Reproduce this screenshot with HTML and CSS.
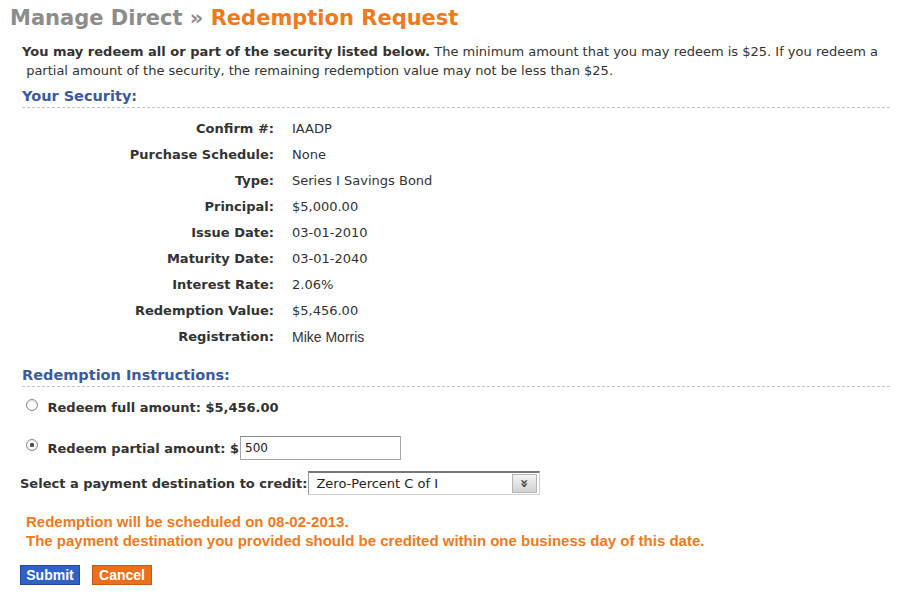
FILE: index.html
```html
<!DOCTYPE html>
<html lang="en">
<head>
  <meta charset="UTF-8">
  <title>Manage Direct - Redemption Request</title>
  <link rel="stylesheet" href="styles.css">
</head>
<body>
  <h1 class="page-title"><span class="crumb">Manage Direct &raquo;</span> <span class="current">Redemption Request</span></h1>

  <p class="intro"><strong>You may redeem all or part of the security listed below.</strong> The minimum amount that you may redeem is $25. If you redeem a<br>&nbsp;partial amount of the security, the remaining redemption value may not be less than $25.</p>

  <h2 class="section-title">Your Security:</h2>
  <dl class="details">
    <dt>Confirm #:</dt><dd>IAADP</dd>
    <dt>Purchase Schedule:</dt><dd>None</dd>
    <dt>Type:</dt><dd>Series I Savings Bond</dd>
    <dt>Principal:</dt><dd>$5,000.00</dd>
    <dt>Issue Date:</dt><dd>03-01-2010</dd>
    <dt>Maturity Date:</dt><dd>03-01-2040</dd>
    <dt>Interest Rate:</dt><dd>2.06%</dd>
    <dt>Redemption Value:</dt><dd>$5,456.00</dd>
    <dt>Registration:</dt><dd class="name">Mike Morris</dd>
  </dl>

  <h2 class="section-title">Redemption Instructions:</h2>
  <div class="options">
    <label class="option"><input type="radio" name="amount"> Redeem full amount: $5,456.00</label>
    <label class="option partial"><input type="radio" name="amount" checked> Redeem partial amount: $<input type="text" class="amount" value="500"></label>
  </div>

  <div class="destination">
    <span class="dest-label">Select a payment destination to credit:</span>
    <div class="select">
      <span class="select-value">Zero-Percent C of I</span>
      <span class="select-arrow">&raquo;</span>
    </div>
  </div>

  <p class="notice">Redemption will be scheduled on 08-02-2013.<br>The payment destination you provided should be credited within one business day of this date.</p>

  <div class="actions">
    <button class="btn btn-submit">Submit</button>
    <button class="btn btn-cancel">Cancel</button>
  </div>
</body>
</html>
```

FILE: styles.css
```css
:root {
  --orange: #ee7a1d;
  --blue: #3a5b9e;
  --gray: #8c8c8c;
  --text: #333;
}
* { margin: 0; padding: 0; box-sizing: border-box; }
body {
  font-family: "DejaVu Sans", Verdana, sans-serif;
  font-size: 13px;
  color: var(--text);
  background: #fff;
  padding: 0 10px;
}
.page-title {
  font-size: 21px;
  font-weight: bold;
  line-height: 26px;
  padding-top: 5px;
}
.crumb { color: var(--gray); }
.current { color: var(--orange); }
.intro {
  margin: 11px 0 0 12px;
  line-height: 19px;
}
.section-title {
  margin: 6px 0 0 12px;
  font-size: 14.5px;
  color: var(--blue);
  line-height: 20px;
  padding-bottom: 1px;
  border-bottom: 1px dashed #c4c4c4;
}
.details {
  display: grid;
  grid-template-columns: 254px auto;
  column-gap: 18px;
  margin: 8px 0 0 10px;
}
.details dt {
  text-align: right;
  font-weight: bold;
  line-height: 26px;
}
.details dd { line-height: 26px; }
.details dd.name { font-family: "Liberation Sans", Arial, sans-serif; font-size: 14px; }
.details + .section-title { margin-top: 15px; }
.options {
  margin: 13px 0 0 16px;
  display: flex;
  flex-direction: column;
  gap: 21px;
}
.option {
  display: flex;
  align-items: center;
  font-weight: bold;
  white-space: pre;
}
.option input[type=radio] {
  appearance: none;
  width: 12px;
  height: 12px;
  border: 1px solid #8a8a8a;
  border-radius: 50%;
  background: radial-gradient(circle at 50% 60%, #fff 40%, #dcdcdc 100%);
  margin: -6px 5px 0 0;
}
.option input[type=radio]:checked {
  background: radial-gradient(circle, #555 0 2px, #fff 2.5px 3.5px, #d8d8d8 100%);
}
.amount {
  width: 161px;
  height: 24px;
  border: 1px solid #a6a6a6;
  border-top-color: #8a8a8a;
  font-family: "DejaVu Sans", Verdana, sans-serif;
  font-size: 12px;
  padding: 0 4px;
  color: #222;
  margin-left: 1px;
}
.destination {
  display: flex;
  align-items: center;
  margin: 11px 0 0 10px;
  gap: 1px;
}
.dest-label { font-weight: bold; }
.select {
  display: flex;
  align-items: center;
  justify-content: space-between;
  width: 232px;
  height: 24px;
  border: 1px solid #d0d0d0;
  border-top: 2px solid #777;
  border-left-color: #999;
  padding: 0 2px 0 7px;
  color: #222;
}
.select-arrow {
  display: flex;
  align-items: center;
  justify-content: center;
  width: 25px;
  height: 19px;
  border: 1px solid #b5b5b5;
  background: linear-gradient(#f4f4f4, #d2d2d2);
  font-size: 14px;
  font-weight: bold;
  color: #444;
  writing-mode: vertical-lr;
}
.notice {
  margin: 17px 0 0 16px;
  font-family: "Liberation Sans", Tahoma, sans-serif;
  font-weight: bold;
  font-size: 15px;
  line-height: 19px;
  color: var(--orange);
}
.actions {
  display: flex;
  gap: 12px;
  margin: 15px 0 0 10px;
}
.btn {
  width: 60px;
  height: 20px;
  border: 1px solid;
  font-family: "Liberation Sans", Tahoma, sans-serif;
  font-weight: bold;
  font-size: 14px;
  color: #fff;
  cursor: pointer;
}
.btn-submit {
  background: #2f62c4;
  border-color: #25499a;
}
.btn-cancel {
  background: #ec701c;
  border-color: #c85a10;
}
```
